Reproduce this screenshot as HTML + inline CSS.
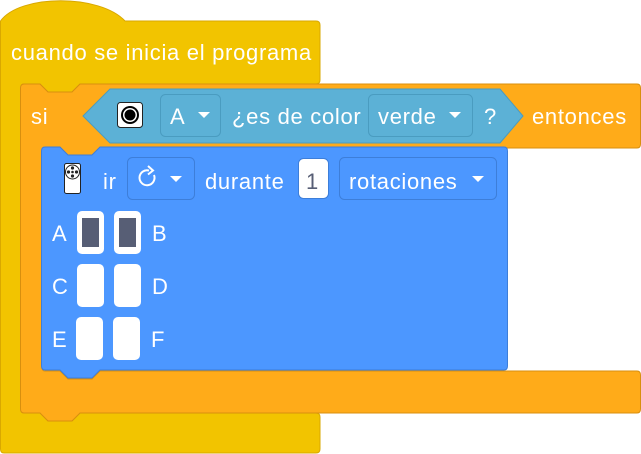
<!DOCTYPE html>
<html><head><meta charset="utf-8"><style>
html,body{margin:0;padding:0;background:#fff;width:641px;height:454px;overflow:hidden}
svg text{font-family:"Liberation Sans",sans-serif;font-size:22px;letter-spacing:0.7px;fill:#fff}
</style></head><body>
<svg width="641" height="454" viewBox="0 0 641 454">
<path d="M0.5,21 C20,-6 100,-6 125,21 L316,21 Q320,21 320,25 L320,80 Q320,84 316,84 L80,84 L72,92 L48,92 L40,84 L24,84 Q21,84 21,88 L21,409 Q21,413 24,413 L40,413 L48,421 L72,421 L80,413 L316,413 Q320,413 320,417 L320,449 Q320,453 316,453 L4,453 Q0.5,453 0.5,449 Z" fill="#F2C400" stroke="#D9A800"/>
<path d="M20.5,88 Q20.5,84 24,84 L40,84 L48,92 L72,92 L80,84 L637,84 Q640.5,84 640.5,88 L640.5,144 Q640.5,148 637,148 L100,148 L92,156 L68,156 L60,148 L45,148 Q42,148 42,152 L42,367 Q42,371 45,371 L60,371 L68,379 L92,379 L100,371 L637,371 Q640.5,371 640.5,375 L640.5,409 Q640.5,413 637,413 L80,413 L72,421 L48,421 L40,413 L24,413 Q20.5,413 20.5,409 Z" fill="#FFAB19" stroke="#D88F0E"/>
<path d="M83,116 L110,89 L500,89 L523,116 L500,143 L110,143 Z" fill="#5CB1D6" stroke="#4A9CC0"/>
<path d="M41.5,151 Q41.5,147 45,147 L60,147 L68,155 L92,155 L100,147 L504,147 Q507.5,147 507.5,151 L507.5,366 Q507.5,370 504,370 L100,370 L92,378 L68,378 L60,370 L45,370 Q41.5,370 41.5,366 Z" fill="#4C97FF" stroke="#3D7ED9"/>
<text x="11" y="60">cuando se inicia el programa</text>
<text x="31" y="124">si</text>
<text x="532" y="124">entonces</text>
<rect x="117.5" y="102.5" width="25" height="25" rx="3" fill="#fff" stroke="#222"/>
<circle cx="130" cy="115" r="9" fill="#000"/><circle cx="130" cy="115" r="7" fill="#fff"/><circle cx="130" cy="115" r="5.5" fill="#000"/>
<rect x="160.5" y="94.5" width="60" height="42" rx="5" fill="#5CB1D6" stroke="#4A9CC0"/>
<text x="170" y="124">A</text><path d="M198,112 L210,112 L204,118 Z" fill="#fff"/>
<text x="232" y="124">¿es de color</text>
<rect x="368.5" y="94.5" width="104" height="42" rx="5" fill="#5CB1D6" stroke="#4A9CC0"/>
<text x="378" y="124">verde</text><path d="M449,112 L461,112 L455,118 Z" fill="#fff"/>
<text x="484" y="124">?</text>
<rect x="64.5" y="163.5" width="16" height="30" rx="2" fill="#fff" stroke="#222"/>
<circle cx="72.5" cy="172" r="7" fill="#fff" stroke="#222"/>
<circle cx="72.5" cy="168" r="1.6" fill="#222"/><circle cx="72.5" cy="176" r="1.6" fill="#222"/><circle cx="68.5" cy="172" r="1.6" fill="#222"/><circle cx="76.5" cy="172" r="1.6" fill="#222"/><circle cx="72.5" cy="172" r="1.3" fill="#222"/>
<text x="103" y="189">ir</text>
<rect x="127.5" y="157.5" width="67" height="42" rx="5" fill="#4C97FF" stroke="#3D7ED9"/>
<path d="M154,175 A7.5,7.5 0 1 1 149,170.5" fill="none" stroke="#fff" stroke-width="2"/>
<path d="M148,166 L153,170.5 L148,174.5" fill="none" stroke="#fff" stroke-width="2"/>
<path d="M170,176 L182,176 L176,182 Z" fill="#fff"/>
<text x="205" y="189">durante</text>
<rect x="298.5" y="158.5" width="30" height="40" rx="5" fill="#fff" stroke="#3D7ED9"/>
<text x="306" y="189" style="fill:#575E75">1</text>
<rect x="339.5" y="157.5" width="157" height="42" rx="5" fill="#4C97FF" stroke="#3D7ED9"/>
<text x="349" y="189">rotaciones</text><path d="M472,176 L484,176 L478,182 Z" fill="#fff"/>
<text x="52" y="241">A</text><text x="152" y="241">B</text>
<text x="52" y="294">C</text><text x="152" y="294">D</text>
<text x="52" y="347">E</text><text x="151" y="347">F</text>
<rect x="77" y="211" width="27" height="43" rx="5" fill="#fff"/><rect x="82" y="218" width="17" height="29" fill="#575E75"/>
<rect x="114" y="211" width="27" height="43" rx="5" fill="#fff"/><rect x="119" y="218" width="17" height="29" fill="#575E75"/>
<rect x="77" y="264" width="27" height="43" rx="5" fill="#fff"/>
<rect x="114" y="264" width="27" height="43" rx="5" fill="#fff"/>
<rect x="76" y="317" width="27" height="43" rx="5" fill="#fff"/>
<rect x="113" y="317" width="27" height="43" rx="5" fill="#fff"/>
</svg>
</body></html>
